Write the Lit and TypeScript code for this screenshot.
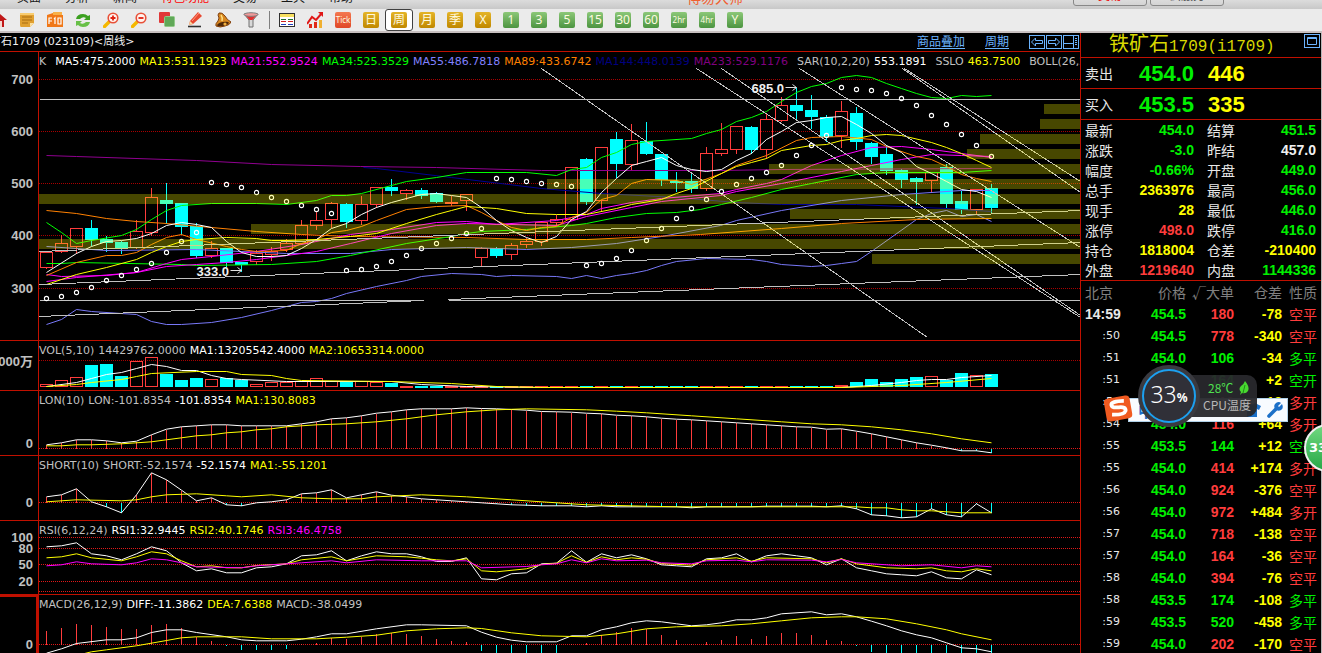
import { LitElement, html, svg, css } from "lit";
import { customElement, property } from "lit/decorators.js";

type Pt = [number, number];

const X0 = 46;
const STEP = 15;
const barX = (i: number) => X0 + STEP * i;

// kind (r = rising, c = falling), high, body top, body bottom, low
const CANDLES: [string, number, number, number, number][] = [
  ["r", 252, 252, 268, 268], ["r", 234, 243, 252, 252], ["r", 228, 228, 247, 253], ["c", 219, 228, 240, 245],
  ["c", 235, 239, 243, 251], ["c", 240, 242, 248, 253], ["r", 219, 231, 248, 248], ["r", 187, 197, 233, 235],
  ["c", 182, 200, 204, 223], ["c", 203, 203, 227, 234], ["c", 222, 226, 256, 257], ["r", 240, 248, 256, 257],
  ["c", 247, 248, 263, 266], ["c", 261, 262, 265, 271], ["r", 249, 253, 262, 264], ["r", 246, 251, 255, 260],
  ["r", 238, 243, 250, 251], ["r", 219, 225, 244, 244], ["r", 210, 220, 226, 229], ["r", 201, 203, 220, 227],
  ["c", 202, 204, 222, 227], ["r", 195, 204, 221, 224], ["r", 186, 187, 205, 207], ["c", 178, 187, 191, 195],
  ["r", 188, 190, 194, 199], ["c", 187, 190, 196, 198], ["c", 191, 193, 202, 202], ["r", 195, 202, 204, 205],
  ["r", 194, 194, 201, 210], ["r", 246, 248, 258, 266], ["c", 246, 248, 256, 257], ["r", 242, 245, 255, 259],
  ["r", 237, 241, 245, 247], ["r", 220, 222, 242, 245], ["r", 214, 219, 223, 225], ["r", 167, 167, 220, 220],
  ["c", 157, 159, 202, 204], ["r", 147, 147, 201, 211], ["c", 131, 139, 164, 177], ["r", 123, 140, 165, 170],
  ["c", 121, 141, 154, 154], ["c", 154, 154, 180, 185], ["c", 171, 181, 183, 191], ["c", 173, 181, 189, 192],
  ["r", 146, 153, 189, 190], ["r", 122, 149, 154, 155], ["r", 125, 126, 150, 153], ["c", 125, 127, 150, 153],
  ["r", 113, 119, 150, 158], ["r", 96, 105, 121, 121], ["c", 87, 105, 111, 120], ["c", 94, 110, 117, 128],
  ["c", 114, 117, 137, 141], ["r", 100, 111, 136, 147], ["c", 106, 113, 142, 149], ["c", 141, 143, 157, 163],
  ["c", 144, 154, 171, 174], ["c", 168, 170, 180, 187], ["c", 176, 178, 182, 204], ["r", 172, 172, 181, 191],
  ["c", 163, 167, 204, 207], ["c", 190, 201, 210, 213], ["r", 188, 189, 210, 214], ["c", 183, 188, 208, 213],
];

const RISE = "#ff3c3c";
const FALL = "#00ffff";

// left edge and top of each horizontal volume-at-price bar
const BANDS: Pt[] = [[1044, 104], [1040, 119], [980, 134], [967, 149], [769, 164], [547, 179], [39, 194], [790, 209], [251, 224], [39, 239], [872, 254]];

const SAR = [
  298, 296, 292, 287, 280, 275, 269, 263, 252, 241, 232, 182, 184, 187, 192, 197, 201, 205, 209, 213, 270, 269, 266, 261,
  255, 248, 243, 238, 233, 228, 178, 179, 181, 183, 184, 186, 265, 263, 258, 250, 240, 228, 218, 208, 199, 191, 184, 178,
  172, 165, 155, 145, 135, 87, 89, 90, 93, 98, 105, 115, 124, 134, 145, 156,
];

const CURVES: { color: string; pts: string }[] = [
  { color: "#900090", pts: "46,155 76,156 196,160 271,164 360,166 436,167 541,170 720,170 781,169 991,168" },
  { color: "#000090", pts: "363,167 376,168 451,177 541,188 601,193 676,197 736,202 781,204 856,204 901,206 946,208 991,211" },
  { color: "#7878f8", pts: "46,246 76,248 106,250 196,249 286,253 350,253 391,249 466,247 526,249 571,247 616,243 661,236 720,225 736,220 781,210 841,200 901,194 961,190 991,190" },
  { color: "#7878f8", pts: "46,324 61,319 76,309 91,311 121,313 136,314 151,321 166,324 181,324 211,322 241,317 271,310 301,302 316,301 331,298 346,293 376,286 406,280 421,276 451,273 481,274 496,276 511,275 556,276 571,278 586,275 601,278 616,275 631,273 646,270 661,265 676,261 706,258 751,259 766,261 781,264 811,266 826,265 841,263 856,261 871,251 916,219 931,213 946,210 961,216 976,214 991,221" },
  { color: "#ff8000", pts: "46,210 76,213 106,218 136,221 166,223 211,227 256,231 301,234 350,236 466,237 526,239 586,239 631,237 700,234 781,228 841,223 916,219 991,218" },
  { color: "#00ff00", pts: "46,263 61,263 76,262 181,264 196,265 271,264 316,261 350,255 406,243 451,236 466,233 481,231 526,229 571,225 586,223 616,217 646,213 676,212 700,209 721,204 751,197 781,189 811,183 856,174 886,172 961,172 991,170" },
  { color: "#00ff00", pts: "46,222 61,232 76,243 91,240 121,235 136,229 151,219 166,210 181,205 211,203 256,203 286,204 316,200 331,195 346,195 361,193 391,185 406,181 436,177 466,172 526,172 556,175 571,169 586,167 601,157 616,152 631,144 646,141 691,138 706,133 721,129 736,121 751,117 766,111 781,101 796,92 811,86 826,83 841,77 856,75 871,77 886,83 901,88 916,93 931,97 946,98 961,95 976,96 991,95" },
  { color: "#ff00ff", pts: "46,281 76,277 136,272 166,263 181,259 211,256 256,251 301,244 350,234 391,229 436,222 466,221 496,224 556,220 586,214 601,208 631,202 661,198 720,193 736,189 766,183 781,179 811,165 841,155 871,147 901,146 931,149 961,153 991,157" },
  { color: "#ff00ff", pts: "46,274 61,276 106,275 136,272 166,266 196,264 226,262 256,259 316,251 350,243 391,233 436,225 466,223 556,225 586,216 631,207 661,201 720,195 736,191 781,183 841,171 871,165 901,159 931,154 961,155 991,156" },
  { color: "#ff8000", pts: "46,275 76,262 106,255 121,255 136,252 151,244 166,237 181,234 196,239 226,246 241,249 256,251 286,250 301,243 316,239 331,232 346,230 361,226 376,220 406,209 436,206 466,205 481,212 496,220 511,227 526,230 541,227 556,226 571,217 586,212 601,199 616,195 631,183 646,179 676,180 691,184 721,173 736,165 766,155 796,140 811,137 841,136 871,139 886,146 916,156 931,159 946,166 961,174 976,178 991,181" },
  { color: "#ffff00", pts: "46,284 76,274 106,267 136,259 151,252 166,246 181,241 196,239 226,237 256,238 271,240 286,240 316,239 350,236 376,233 406,223 436,214 451,210 466,206 496,208 526,213 556,214 586,214 616,208 631,204 661,199 676,193 691,188 721,173 736,166 751,162 766,158 781,150 811,145 826,144 841,140 856,138 871,135 886,134 901,135 931,142 946,147 961,153 976,160 991,167" },
  { color: "#ffffff", pts: "46,272 76,253 91,246 106,241 121,240 136,238 151,233 166,225 181,222 196,224 211,227 226,241 241,252 256,256 271,256 286,255 301,248 316,239 331,228 346,223 361,214 376,207 391,202 406,198 421,194 436,193 451,195 466,197 481,207 496,220 511,230 526,237 541,242 556,236 571,219 586,211 601,192 616,178 631,165 646,161 661,157 676,165 691,169 706,171 721,169 736,160 751,153 766,139 781,131 796,122 811,120 826,117 841,116 856,124 871,133 886,145 901,152 916,166 931,173 946,181 961,189 976,191 991,197" },
];

const TRENDS: [number, number, number, number][] = [
  [39, 99, 1080, 99], [39, 300, 423, 300], [448, 300, 1080, 300], [39, 251, 1080, 210], [39, 284, 1080, 242],
  [39, 316, 423, 300], [448, 299, 1080, 274], [541, 68, 927, 337], [696, 68, 1080, 317], [721, 68, 1080, 315],
  [799, 68, 1080, 247], [902, 68, 1080, 192], [904, 68, 1080, 181],
];

const VOLUME = [
  384, 380, 377, 365, 364, 376, 361, 357, 374, 380, 378, 379, 378, 380, 384, 382, 382, 381, 378, 381, 381, 381, 382, 383,
  ...Array(29).fill(386), 385, 382, 379, 382, 379, 377, 376, 380, 373, 375, 374,
];

// Oscillator samples are kept in thirds of a pixel below the first study.
const third = (v: number) => 335 + v / 3;

const LON = [
  328, 322, 313, 313, 316, 322, 317, 298, 281, 274, 271, 268, 268, 271, 271, 271, 271, 265, 259, 250, 247, 241, 233, 229,
  223, 220, 220, 220, 217, 219, 220, 222, 224, 228, 229, 230, 233, 235, 239, 241, 244, 248, 251, 253, 256, 259, 262, 265,
  268, 271, 274, 275, 281, 280, 287, 295, 304, 313, 322, 329, 337, 346, 346, 352,
];
const LON_MA: Pt[] = [[0, 331], [1, 331], [2, 328], [3, 328], [5, 325], [7, 319], [8, 313], [9, 307], [10, 301], [11, 298], [12, 292], [13, 289], [14, 283], [15, 280], [16, 274], [18, 268], [20, 265], [22, 259], [24, 250], [26, 238], [28, 229], [30, 223], [32, 220], [36, 223], [38, 227], [40, 232], [43, 241], [46, 250], [49, 259], [51, 265], [53, 268], [55, 274], [57, 283], [59, 295], [61, 310], [63, 322]];

const SHORT = [
  484, 478, 460, 499, 514, 532, 478, 412, 433, 464, 496, 487, 508, 511, 502, 499, 493, 475, 472, 463, 487, 478, 469, 479,
  484, 490, 493, 496, 499, 502, 505, 508, 509, 511, 511, 511, 514, 511, 514, 514, 514, 514, 514, 517, 514, 514, 514, 514,
  512, 512, 512, 512, 514, 511, 520, 538, 541, 547, 544, 520, 538, 544, 505, 532,
];
const SHORT_MA: Pt[] = [[0, 499], [2, 493], [5, 496], [6, 493], [7, 484], [8, 478], [10, 475], [12, 481], [13, 484], [15, 478], [17, 487], [19, 490], [21, 490], [22, 484], [25, 478], [28, 484], [31, 493], [33, 499], [36, 508], [40, 512], [42, 514], [54, 514], [55, 517], [56, 517], [57, 523], [58, 526], [59, 526], [61, 532], [63, 532]];

const RSI1 = [
  634, 631, 622, 655, 661, 673, 655, 634, 646, 682, 706, 700, 712, 712, 697, 694, 685, 661, 658, 646, 676, 661, 649, 655,
  655, 664, 678, 678, 667, 730, 733, 715, 712, 685, 683, 646, 680, 655, 667, 658, 670, 688, 691, 694, 670, 667, 655, 679,
  661, 655, 661, 667, 688, 670, 697, 706, 715, 718, 721, 709, 727, 730, 703, 718,
];
const RSI2: Pt[] = [[0, 667], [1, 664], [2, 655], [3, 667], [5, 676], [6, 664], [7, 649], [8, 655], [9, 676], [10, 694], [11, 691], [12, 697], [13, 697], [14, 690], [16, 685], [17, 673], [19, 664], [20, 676], [22, 661], [24, 664], [25, 668], [26, 673], [27, 676], [28, 670], [29, 706], [30, 709], [32, 700], [33, 687], [34, 683], [35, 661], [36, 680], [37, 664], [38, 673], [39, 667], [40, 671], [41, 684], [43, 689], [44, 673], [46, 667], [47, 677], [48, 667], [51, 670], [52, 682], [53, 670], [54, 685], [56, 697], [58, 700], [59, 697], [60, 706], [61, 709], [62, 700], [63, 706]];
const RSI3: Pt[] = [[0, 691], [1, 688], [2, 679], [3, 685], [5, 688], [6, 682], [7, 670], [8, 673], [9, 682], [10, 694], [13, 697], [14, 691], [17, 682], [19, 676], [20, 682], [22, 673], [25, 676], [28, 676], [29, 697], [32, 693], [33, 688], [34, 685], [35, 673], [36, 682], [37, 670], [38, 676], [40, 674], [41, 682], [43, 685], [44, 676], [46, 674], [47, 679], [48, 673], [51, 674], [52, 679], [53, 672], [54, 682], [57, 691], [59, 688], [61, 697], [62, 691], [63, 694]];

const MACD = [
  884, 876, 864, 867, 873, 879, 879, 867, 864, 876, 903, 915, 931, 942, 942, 942, 939, 925, 921, 905, 908, 902, 895, 890,
  894, 900, 909, 915, 918, 945, 960, 960, 960, 960, 960, 925, 921, 898, 888, 876, 879, 897, 912, 923, 918, 912, 900, 908,
  900, 891, 891, 897, 912, 915, 931, 948, 960, 960, 960, 960, 960, 960, 960, 960,
];
const DIFF: Pt[] = [[0, 953], [1, 940], [2, 924], [4, 913], [5, 913], [6, 907], [7, 891], [8, 883], [9, 883], [10, 891], [12, 904], [13, 913], [14, 916], [16, 916], [17, 911], [18, 904], [19, 895], [20, 895], [22, 880], [24, 868], [25, 868], [28, 871], [29, 890], [30, 905], [31, 914], [32, 919], [34, 919], [35, 901], [36, 901], [37, 883], [38, 874], [39, 862], [40, 856], [41, 859], [42, 865], [43, 871], [44, 868], [45, 862], [46, 853], [47, 853], [48, 847], [49, 835], [51, 829], [52, 838], [53, 835], [54, 844], [55, 857], [56, 871], [57, 886], [58, 898], [59, 907], [60, 922], [61, 937], [62, 940], [63, 949]];
const DEA: Pt[] = [[2, 960], [3, 949], [4, 943], [6, 931], [8, 915], [9, 907], [10, 904], [13, 904], [15, 910], [18, 910], [20, 905], [22, 899], [24, 886], [26, 880], [28, 877], [29, 879], [31, 892], [33, 901], [36, 904], [38, 895], [40, 880], [42, 874], [45, 871], [47, 865], [49, 856], [51, 847], [53, 844], [54, 844], [56, 850], [58, 865], [60, 883], [61, 895], [63, 913]];

const indexed = (v: number[]): Pt[] => v.map((y, i) => [i, y]);
const trace = (pts: Pt[], color: string) =>
  svg`<polyline class="line" stroke=${color} points=${pts.map(([i, v]) => `${barX(i)},${third(v).toFixed(1)}`).join(" ")}></polyline>`;
const rule = (y: number, dim = false) =>
  svg`<line class=${dim ? "rule dim" : "rule"} x1="38.5" x2="1080.5" y1=${y} y2=${y}></line>`;
const stems = (v: number[], zero: number) =>
  v.map((raw, i) => {
    const y = Math.round(third(raw));
    return svg`<line class="crisp" x1=${barX(i)} x2=${barX(i)} y1=${zero} y2=${y} stroke=${y < zero ? RISE : FALL}></line>`;
  });

type Label = [string, string];
interface Study {
  top: number;
  height: number;
  legend: Label[];
  axis: [string, number][];
  plot: () => unknown;
  active?: boolean;
}

const GREY = "#c0c0c0";
const WHITE = "#ffffff";
const YELLOW = "#ffff00";

const pricePlot = () => svg`
  ${[79, 131, 183, 235, 288].map((y) => rule(y, true))}
  ${CANDLES.map(([k, hi, t, b, lo], i) => {
    const x = barX(i);
    const c = k === "r" ? RISE : FALL;
    return svg`<g class="crisp" stroke=${c}>
      <line x1=${x} x2=${x} y1=${hi} y2=${t}></line><line x1=${x} x2=${x} y1=${b - 1} y2=${lo}></line>
      <rect x=${x - 6} y=${t} width="12" height=${Math.max(1, b - t - 1)} fill=${k === "r" ? "none" : c}></rect></g>`;
  })}
  ${CURVES.map((c) => svg`<polyline class="line" stroke=${c.color} points=${c.pts}></polyline>`)}
  ${TRENDS.map(([a, b, c, d]) => svg`<line class="crisp" stroke="#c0c0c0" x1=${a} y1=${b} x2=${c} y2=${d}></line>`)}
  ${SAR.map((y, i) => svg`<circle cx=${barX(i)} cy=${y} r="2.1" fill="none" stroke="#fff" stroke-width="1.1"></circle>`)}
  ${BANDS.map(([x, y]) => svg`<rect x=${x - 0.5} y=${y - 0.5} width=${1080.5 - x} height="10" fill="#ff0" fill-opacity=".28"></rect>`)}
  <text class="mark" x="751" y="92">685.0</text><path class="arrow" d="M785 87H796M792 84L796 87L792 90"></path>
  <text class="mark" x="196" y="275">333.0</text><path class="arrow" d="M230 270H241M237 267L241 270L237 273"></path>`;

const volumePlot = () => svg`
  ${rule(360, true)}
  ${VOLUME.map((t, i) => {
    const r = CANDLES[i][0] === "r";
    return svg`<rect class="crisp" x=${barX(i) - 6} y=${t} width="12" height=${Math.max(0.5, 386 - t)} stroke=${r ? RISE : FALL} fill=${r ? "none" : FALL}></rect>`;
  })}
  <polyline class="line" stroke="#fff" points="46,386 76,382 91,378 106,374 121,372 136,368 151,364 166,366 181,370 196,370 211,375 226,378 241,379 286,381 391,381 421,384 466,386 541,387 841,387 871,385 901,382 916,380 931,379 946,379 961,377 991,375"></polyline>
  <polyline class="line" stroke="#ff0" points="46,386 76,384 91,382 121,379 136,376 151,373 196,371 226,371 241,374 271,375 286,378 301,380 391,381 451,383 496,386 541,387 841,387 901,385 946,382 991,378"></polyline>`;

const STUDIES: Study[] = [
  {
    top: 52, height: 288,
    legend: [
      ["K", GREY], ["", GREY], ["MA5:475.2000", WHITE], ["MA13:531.1923", YELLOW], ["MA21:552.9524", "#ff00ff"], ["MA34:525.3529", "#00ff00"],
      ["MA55:486.7818", "#8080ff"], ["MA89:433.6742", "#ff8000"], ["MA144:448.0139", "#000080"], ["MA233:529.1176", "#800080"],
      ["", GREY], ["SAR(10,2,20)", GREY], ["553.1891", WHITE], ["", GREY], ["SSLO", GREY], ["463.7500", YELLOW], ["", GREY], ["BOLL(26,26,2)", GREY],
    ],
    axis: [["700", 79], ["600", 131], ["500", 183], ["400", 235], ["300", 288]],
    plot: pricePlot,
  },
  {
    top: 341, height: 49,
    legend: [["VOL(5,10)", GREY], ["14429762.0000", GREY], ["MA1:13205542.4000", WHITE], ["MA2:10653314.0000", YELLOW]],
    axis: [["1000万", 361]],
    plot: volumePlot,
  },
  {
    top: 391, height: 64,
    legend: [["LON(10)", GREY], ["LON:-101.8354", GREY], ["-101.8354", WHITE], ["MA1:130.8083", YELLOW]],
    axis: [["0", 443]],
    plot: () => svg`${rule(448)}${stems(LON, 448)}${trace(indexed(LON), WHITE)}${trace(LON_MA, YELLOW)}`,
  },
  {
    top: 456, height: 64,
    legend: [["SHORT(10)", GREY], ["SHORT:-52.1574", GREY], ["-52.1574", WHITE], ["MA1:-55.1201", YELLOW]],
    axis: [["0", 502]],
    plot: () => svg`${rule(502)}${stems(SHORT, 502)}${trace(indexed(SHORT), WHITE)}${trace(SHORT_MA, YELLOW)}`,
  },
  {
    top: 521, height: 73,
    legend: [["RSI(6,12,24)", GREY], ["RSI1:32.9445", WHITE], ["RSI2:40.1746", YELLOW], ["RSI3:46.4758", "#ff00ff"]],
    axis: [["100", 537], ["80", 548], ["50", 564], ["20", 581]],
    plot: () => svg`${[537, 548, 564, 581, 591].map((y) => rule(y))}${trace(indexed(RSI1), WHITE)}${trace(RSI2, YELLOW)}${trace(RSI3, "#ff00ff")}`,
  },
  {
    top: 595, height: 58, active: true,
    legend: [["MACD(26,12,9)", GREY], ["DIFF:-11.3862", WHITE], ["DEA:7.6388", YELLOW], ["MACD:-38.0499", GREY]],
    axis: [["0", 644]],
    plot: () => svg`${rule(644)}${stems(MACD, 644)}${trace(DIFF, WHITE)}${trace(DEA, YELLOW)}`,
  },
];

@customElement("chart-study")
class ChartStudy extends LitElement {
  @property({ attribute: false }) study!: Study;

  static styles = css`
    :host { display: grid; grid-template-columns: 38px minmax(0, 1fr); border-bottom: 1px solid #c01000; }
    :host(:last-child) { border-bottom: 0; }
    svg { display: block; width: 100%; }
    .gutter { overflow: hidden; }
    .active { box-shadow: inset -2px 2px #c01000; }
    .plot { position: relative; overflow: hidden; border-left: 1px solid #c01000; min-width: 0; }
    .legend {
      position: absolute; left: 0; top: 1px; display: flex; gap: 4px; white-space: nowrap;
      font: 11px/18px "DejaVu Sans", sans-serif;
    }
    .gap { width: 1px; }
    .axis { font: bold 13px "Liberation Sans", "Noto Sans CJK SC", sans-serif; fill: #c0c0c0; text-anchor: end; }
    .mark { font: bold 13px "Liberation Sans", sans-serif; fill: #f0f0f0; }
    .arrow { fill: none; stroke: #e0e0e0; stroke-width: 1; }
    .line { fill: none; stroke-width: 1; }
    .crisp { shape-rendering: crispEdges; stroke-width: 1; }
    .rule { shape-rendering: crispEdges; stroke: #e01818; stroke-width: 1; stroke-dasharray: 1 1; }
    .dim { stroke: #a80000; }
  `;

  render() {
    const { top, height, legend, axis, plot, active } = this.study;
    return html`
      <div class="gutter ${active ? "active" : ""}">
        <svg height=${height} viewBox="0 ${top} 38 ${height}">
          ${axis.map(([t, y]) => svg`<text class="axis" x="33" y=${y + 5}>${t}</text>`)}
        </svg>
      </div>
      <div class="plot">
        <svg height=${height} viewBox="39 ${top} 1041 ${height}" preserveAspectRatio="none">
          <g transform="translate(.5 .5)">${plot()}</g>
        </svg>
        <div class="legend">
          ${legend.map(([t, c]) => (t ? html`<span style="color:${c}">${t}</span>` : html`<span class="gap"></span>`))}
        </div>
      </div>`;
  }
}

const G = "#00f000";
const R = "#ff3c3c";
const STATS: [string, string, string, string, string, string][] = [
  ["最新", "454.0", G, "结算", "451.5", G],
  ["涨跌", "-3.0", G, "昨结", "457.0", "#f0f0f0"],
  ["幅度", "-0.66%", G, "开盘", "449.0", G],
  ["总手", "2363976", YELLOW, "最高", "456.0", G],
  ["现手", "28", YELLOW, "最低", "446.0", G],
  ["涨停", "498.0", R, "跌停", "416.0", G],
  ["持仓", "1818004", YELLOW, "仓差", "-210400", YELLOW],
  ["外盘", "1219640", R, "内盘", "1144336", G],
];

const TICKS: [string, string, string, string, string, string][] = [
  ["14:59", "454.5", "180", "-78", "空平", R],
  [":50", "454.5", "778", "-340", "空平", R],
  [":51", "454.0", "106", "-34", "多平", G],
  [":51", "453.5", "164", "+2", "空开", G],
  [":54", "454.0", "110", "+18", "多开", R],
  [":54", "454.0", "116", "+64", "多开", R],
  [":55", "453.5", "144", "+12", "空开", G],
  [":55", "454.0", "414", "+174", "多开", R],
  [":56", "454.0", "924", "-376", "空平", R],
  [":56", "454.0", "972", "+484", "多开", R],
  [":57", "454.0", "718", "-138", "空平", R],
  [":57", "454.0", "164", "-36", "空平", R],
  [":58", "454.0", "394", "-76", "空平", R],
  [":58", "453.5", "174", "-108", "多平", G],
  [":59", "453.5", "520", "-458", "多平", G],
  [":59", "454.0", "202", "-170", "空平", R],
];

@customElement("quote-panel")
class QuotePanel extends LitElement {
  static styles = css`
    :host {
      display: block; border-left: 1px solid #c01000; border-right: 1px solid #b8b8b8; background: #000; color: #e8e8e8;
      font: 14px/20px "Noto Sans CJK SC", sans-serif; overflow: hidden;
    }
    h1 {
      margin: 0; height: 24px; display: flex; justify-content: space-between; align-items: center; padding: 0 1px 0 28px;
      font: 20px/24px "Noto Sans CJK SC", sans-serif; color: #d8d800; white-space: nowrap;
    }
    .code { font: 16px/24px "Liberation Mono", monospace; }
    .restore { background: #000; border: 1px solid #6cb4ff; padding: 0; width: 16px; height: 14px; margin-bottom: 8px; display: grid; place-items: center; }
    .restore svg { display: block; }
    .deal { display: flex; align-items: center; height: 30px; padding-left: 4px; border-top: 1px solid #c01000; }
    .deal b { font: bold 22px/30px "Liberation Sans", sans-serif; padding-top: 2px; }
    .ask { width: 81px; text-align: right; color: #00f000; }
    .lots { margin-left: 14px; color: #ff0; }
    table { border-collapse: collapse; table-layout: fixed; width: 100%; border-top: 1px solid #c01000; }
    th, td { padding: 0; text-align: right; font-weight: 400; white-space: nowrap; }
    .num { font: bold 14px/20px "Liberation Sans", sans-serif; }
    .stats td { height: 20px; }
    .stats .name, .stats .name2 { text-align: left; }
    .stats .name { width: 34px; padding-left: 4px; }
    .stats .value { width: 75px; }
    .stats .name2 { width: 41px; padding-left: 13px; }
    .stats .value2 { padding-right: 5px; }
    .ticks td, .ticks th { height: 22px; }
    .ticks th { color: #808080; }
    .ticks .time { width: 35px; padding-left: 4px; }
    .ticks th.time { text-align: left; }
    .ticks .price { width: 66px; }
    .ticks .lot { width: 48px; }
    .ticks .diff { width: 48px; color: #ff0; }
    .ticks th.diff { color: #808080; }
    .ticks .side { padding-right: 4px; }
    .ticks .sec { font: 11px/20px "DejaVu Sans", sans-serif; }
    .green { color: #00f000; }
  `;

  render() {
    return html`
      <h1>
        <span>铁矿石<span class="code">1709(i1709)</span></span>
        <button class="restore" aria-label="还原">
          <svg width="10" height="8"><path d="M.5 .5H9.5V7.5H.5ZM.5 1.5H9.5" fill="none" stroke="#6cb4ff"></path></svg>
        </button>
      </h1>
      <div class="deal"><span>卖出</span><b class="ask">454.0</b><b class="lots">446</b></div>
      <div class="deal"><span>买入</span><b class="ask">453.5</b><b class="lots">335</b></div>
      <table class="stats">
        ${STATS.map(([a, v, c, b, w, d]) => html`<tr>
          <td class="name">${a}</td><td class="value num" style="color:${c}">${v}</td>
          <td class="name2">${b}</td><td class="value2 num" style="color:${d}">${w}</td>
        </tr>`)}
      </table>
      <table class="ticks">
        <thead><tr><th class="time">北京</th><th class="price">价格</th><th class="lot">√大单</th><th class="diff">仓差</th><th class="side">性质</th></tr></thead>
        <tbody>
          ${TICKS.map(([t, p, l, d, s, c], i) => html`<tr>
            <td class="time ${i ? "sec" : "num"}">${t}</td><td class="price num green">${p}</td>
            <td class="lot num" style="color:${c}">${l}</td><td class="diff num">${d}</td><td class="side" style="color:${c}">${s}</td>
          </tr>`)}
        </tbody>
      </table>`;
  }
}

const magnifier = (sign: string) => svg`
  <path d="M1.5 14.5L6.5 9.5" stroke="#f5b800" stroke-width="3.4" stroke-linecap="round"></path>
  <circle cx="10" cy="6" r="4.8" fill="#fff4ee" stroke="#e85038" stroke-width="1.6"></circle><path d=${sign} stroke="#e02010" stroke-width="1.8"></path>`;

const GLYPHS: [string, unknown][] = [
  ["主页", svg`<path d="M0 8L8 1L16 8H13V15H3V8Z" fill="#c01818"></path><rect x="6" y="9" width="5" height="6" fill="#f4d8d0"></rect>`],
  ["公告", svg`<path d="M1 2Q1 1 3 1H14Q15 1 15 3V11L11 15H2Q1 15 1 13Z" fill="#e0a030"></path><path d="M15 11L11 15V11Z" fill="#fce0a0"></path><path d="M3 5H13M3 8H13M3 11H9" stroke="#a86c10"></path><path d="M1 2H15" stroke="#f8cc70" stroke-width="2"></path>`],
  ["F10", svg`<path d="M0 3L6 1V3H16V15H0Z" fill="#f07818"></path><path d="M6 3V0H15V3Z" fill="#f8b048"></path><path d="M2 12V6H5M2 9H5M7 7L8 6V12M11 6H14V12H11Z" fill="none" stroke="#fff" stroke-width="1.2"></path>`],
  ["刷新", svg`<path d="M1 7Q2 2 8 2Q11 2 13 4L15 3V8H9L11 6Q8 4 5 7Z" fill="#3ca020"></path><path d="M15 10Q14 15 8 15Q5 15 3 13L1 14V9H7L5 11Q8 13 11 10Z" fill="#68c048"></path>`],
  ["放大", magnifier("M7.500 6H12.500M10 3.500V8.500")],
  ["缩小", magnifier("M7.500 6H12.500")],
  ["叠加", svg`<rect x="0" y="0" width="11" height="11" rx="1" fill="#e03838"></rect><rect x="5.500" y="4.500" width="10" height="10" rx="1" fill="#60a858" stroke="#90c888"></rect>`],
  ["画线", svg`<path d="M3 9L11 0L15 4L6 12L2 13Z" fill="#e84830"></path><path d="M3 9L6 12L2 13Z" fill="#f8d8a0"></path><path d="M5 9L12 1" stroke="#ff9880"></path><path d="M1 14.500H14" stroke="#303030" stroke-width="1.600"></path>`],
  ["预警", svg`<path d="M4 1Q7 0 10 4Q12 8 16 10Q15 13 10 14Q5 16 1 14Q0 12 3 9Q5 6 3 3Z" fill="#d88820" stroke="#804010"></path><ellipse cx="8" cy="12" rx="6" ry="2" transform="rotate(-12 8 12)" fill="#502808"></ellipse><circle cx="10" cy="12" r="1.600" fill="#f0b040"></circle><path d="M6 3Q8 6 7 9" stroke="#ffe080" fill="none" stroke-width="1.500"></path>`],
  ["筛选", svg`<path d="M1 2H15L10 8V15H6V8Z" fill="#d8d8d8" stroke="#707070"></path><path d="M3 4H13L9.500 8H6.500Z" fill="#e03030"></path><ellipse cx="8" cy="2.500" rx="7" ry="1.800" fill="#f09898" stroke="#808080"></ellipse>`],
];

const TABLE_GLYPHS: [string, unknown][] = [
  ["报价", svg`<rect x="0.500" y="1.500" width="15" height="13" fill="#fff" stroke="#303030"></rect><path d="M1 3.500H15" stroke="#f8e060" stroke-width="3"></path><path d="M2 7.500H7M9 7.500H14" stroke="#207030"></path><path d="M2 9.500H7M9 9.500H14" stroke="#d02020"></path><path d="M2 12.500H7M9 12.500H14" stroke="#2040c0"></path>`],
  ["走势", svg`<path d="M2 16V12H5V16M7 16V10H10V16" fill="#e02818"></path><path d="M12 16V8H15V16" fill="#f0b030"></path><path d="M0 12L5 5L9 8L15 1" fill="none" stroke="#e01818" stroke-width="2"></path><path d="M11 0H16V5Z" fill="#e01818"></path>`],
];

const PERIODS: [string, string][] = [
  ["Tick", "red"], ["日", "gold"], ["周", "gold"], ["月", "gold"], ["季", "gold"], ["X", "gold"], ["1", "leaf"], ["3", "leaf"], ["5", "leaf"],
  ["15", "leaf"], ["30", "leaf"], ["60", "leaf"], ["2hr", "leaf"], ["4hr", "leaf"], ["Y", "leaf"],
];

@customElement("app-root")
class AppRoot extends LitElement {
  static styles = css`
    :host {
      display: flex; flex-direction: column; position: relative; height: 100vh; overflow: hidden; background: #000;
      font: 12px/16px "Noto Sans", "Noto Sans CJK SC", sans-serif; color: #fff;
    }
    .menu {
      height: 9px; flex: none; overflow: hidden; display: grid; grid-template-columns: 1fr auto 1fr; background: linear-gradient(#dcdcdc, #c8c8c8);
      font: 12px/16px "Noto Sans CJK SC", sans-serif; color: #181818;
    }
    .menu nav { display: flex; gap: 24px; padding-left: 17px; margin-top: -11px; }
    .menu a { color: inherit; text-decoration: none; white-space: nowrap; }
    .menu .hot { color: #ff0000; }
    .brand { margin-top: -11px; font-size: 14px; color: #f06030; padding-left: 108px; }
    .tools { display: flex; justify-content: flex-end; gap: 3px; padding-right: 98px; margin-top: -13px; }
    .tools button {
      width: 74px; height: 19px; padding: 0 0 3px; border: 1px solid #888; border-radius: 3px; background: linear-gradient(#eee, #d4d4d4);
      font: 12px/14px "Noto Sans CJK SC", sans-serif; color: #444;
    }
    .tools .hot { color: #f00000; }
    .bar {
      height: 22px; flex: none; display: flex; align-items: center; background: #ebebeb; border-bottom: 2px solid #c8c0c0; overflow: hidden;
    }
    .bar button {
      flex: none; width: 28px; height: 22px; padding: 0; border: 1px solid transparent; border-radius: 3px; background: none; display: grid; place-items: center;
    }
    .bar button:first-child { margin-left: -15px; }
    .bar .on { background: #fff; border-color: #404040; }
    .bar svg { display: block; width: 16px; height: 16px; }
    .sep { flex: none; width: 8px; height: 18px; display: flex; justify-content: center; }
    .sep::before { content: ""; width: 1px; background: #808080; }
    .tile {
      width: 16px; height: 16px; border-radius: 2px; color: #fffbe0; display: grid; place-items: center; overflow: hidden;
      font: 12px/16px "Noto Sans", "Noto Sans CJK SC", sans-serif;
    }
    .tile.long { font-size: 8px; }
    .gold { background: linear-gradient(#e4b428, #c08800); }
    .leaf { background: linear-gradient(#8cc878, #4c9440); }
    .red { background: linear-gradient(#f47850, #e04828); }
    .body { flex: 1; min-height: 0; display: grid; grid-template-columns: minmax(0, 1fr) 242px; }
    .title { height: 18px; display: flex; align-items: center; border-bottom: 1px solid #c01000; overflow: hidden; padding-right: 1px; }
    .name { margin-left: -10px; flex: 1; white-space: nowrap; color: #f0f0f0; font: 11px/16px "DejaVu Sans", "Noto Sans CJK SC", sans-serif; }
    .title a { color: #6cb4ff; margin-right: 20px; text-underline-offset: 2px; }
    .icons { display: flex; gap: 1px; }
    .icons button { width: 16px; height: 14px; padding: 0; border: 1px solid #6cb4ff; background: #000; }
    .icons svg { display: block; }
    .ime {
      position: absolute; right: 34px; top: 398px; width: 160px; height: 24px; box-sizing: border-box; background: #f8fbff; border: 1px solid #b0d0e8;
      display: flex; align-items: center; justify-content: space-between; padding: 0 4px 0 9px; color: #1c70c8; font: bold 16px/20px "Noto Sans CJK SC", sans-serif;
    }
    .ime .pair { display: flex; gap: 6px; }
    .logo { position: absolute; right: 189px; top: 393px; }
    .cpu {
      position: absolute; right: 65px; top: 375px; width: 54px; height: 42px; padding-left: 33px; border-radius: 10px;
      background: rgba(40, 40, 44, .95); display: flex; flex-direction: column; justify-content: center; color: #b8b8b8;
      font: 12px/17px "Noto Sans CJK SC", sans-serif;
    }
    .temp { color: #50e050; display: flex; align-items: center; gap: 6px; padding-left: 5px; }
    .dial {
      position: absolute; right: 126px; top: 369px; width: 50px; height: 50px; border: 2px solid #1ca0f0; border-radius: 50%; background: #303038;
      box-shadow: 0 0 0 4px #3a3a40; display: flex; align-items: center; justify-content: center; color: #fff;
      font: 300 23px/46px "Noto Sans", sans-serif; align-items: flex-start;
    }
    .dial small { font: bold 12px/14px "Noto Sans", sans-serif; padding-top: 20px; }
    .ball {
      position: absolute; right: -30px; top: 424px; width: 44px; height: 44px; border: 2px solid #f0f0f0; border-radius: 50%;
      background: linear-gradient(#70d880, #28a848); font: bold 13px/44px "DejaVu Sans", sans-serif; text-indent: 3px;
    }
  `;

  private glyphButton([label, art]: [string, unknown]) {
    return html`<button aria-label=${label}><svg viewBox="0 0 16 16">${art}</svg></button>`;
  }

  render() {
    return html`
      <header class="menu">
        <nav>
          <a href="#">页面</a><a href="#">分析</a><a href="#">新闻</a><a href="#" class="hot">特色功能</a><a href="#">交易</a><a href="#">工具</a><a href="#">帮助</a>
        </nav>
        <span class="brand">博易大师</span>
        <div class="tools"><button class="hot">交易</button><button>云服务</button></div>
      </header>
      <div class="bar" role="toolbar">
        ${GLYPHS.map((g) => this.glyphButton(g))}
        <span class="sep"></span>
        ${TABLE_GLYPHS.map((g) => this.glyphButton(g))}
        ${PERIODS.map(([t, c]) => html`<button class=${t === "周" ? "on" : ""}><span class="tile ${c} ${t.length > 2 ? "long" : ""}">${t}</span></button>`)}
      </div>
      <div class="body">
        <main>
          <div class="title">
            <span class="name">矿石1709 (023109)&lt;周线&gt;</span>
            <a href="#">商品叠加</a><a href="#">周期</a>
            <span class="icons">
              <button aria-label="前一个"><svg width="14" height="12"><path d="M1.500 6L5.500 2V4.500H12.500V7.500H5.500V10Z" fill="none" stroke="#6cb4ff"></path></svg></button>
              <button aria-label="后一个"><svg width="14" height="12"><path d="M12.500 6L8.500 2V4.500H1.500V7.500H8.500V10Z" fill="none" stroke="#6cb4ff"></path></svg></button>
              <button aria-label="布局"><svg width="14" height="12"><path d="M0 7.500H9.500M9.500 0V12M11 2.500H13M11 4.500H13M11 6.500H13M11 8.500H13" fill="none" stroke="#6cb4ff"></path></svg></button>
            </span>
          </div>
          ${STUDIES.map((s) => html`<chart-study .study=${s}></chart-study>`)}
        </main>
        <quote-panel></quote-panel>
      </div>
      <div class="ime">
        <span>中</span>
        <span class="pair">
          <svg width="18" height="16" viewBox="0 0 18 16"><path d="M0 4L6 1Q9 4 12 1L18 4L16 8L14 7V15H4V7L2 8Z" fill="#1c70c8"></path></svg>
          <svg width="16" height="16" viewBox="0 0 16 16"><path d="M2 14L9 7" stroke="#1c70c8" stroke-width="3.600" stroke-linecap="round"></path><path d="M14 1L11 4L12 5L15 2Q17 6 14 8Q11 10 8 7Q6 3 9 1Q12 -1 14 1Z" fill="#1c70c8"></path></svg>
        </span>
      </div>
      <svg class="logo" width="30" height="30" viewBox="0 0 30 30">
        <g transform="rotate(-10 15 15)"><rect x="2" y="4" width="26" height="23" rx="4" fill="#f05a20"></rect>
        <path d="M22 9Q9 7 9 11Q9 14 16 14.500Q23 15 22 19Q20 23 8 20.500" fill="none" stroke="#fff" stroke-width="3.800"></path></g>
      </svg>
      <div class="cpu">
        <span class="temp">28℃<svg width="10" height="14" viewBox="0 0 10 14"><path d="M6 0Q11 6 9 10Q7 13 3 12L1 14L2 11Q-1 8 2 5Q5 3 6 0Z" fill="#48d830"></path><path d="M6 4L4 12" stroke="#208818"></path></svg></span>
        <span>CPU温度</span>
      </div>
      <div class="dial">33<small>%</small></div>
      <div class="ball">33</div>`;
  }
}
